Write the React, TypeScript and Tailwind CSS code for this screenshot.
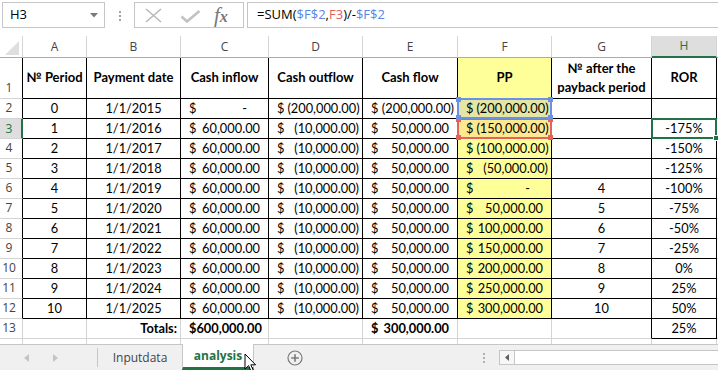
import React from 'react';

type Acc = { k: 'neg' | 'pos' | 'zero'; v?: string; bold?: boolean };

const GRID = 'grid grid-cols-[23px_64px_94px_88px_94px_95px_94px_100px_65px_1fr]';
const UI = "font-['Open_Sans',sans-serif]";

const neg = (v: string): Acc => ({ k: 'neg', v });
const pos = (v: string): Acc => ({ k: 'pos', v });
const zero: Acc = { k: 'zero' };

const pp: Acc[] = [
  neg('200,000.00'),
  neg('150,000.00'),
  neg('100,000.00'),
  neg('50,000.00'),
  zero,
  pos('50,000.00'),
  pos('100,000.00'),
  pos('150,000.00'),
  pos('200,000.00'),
  pos('250,000.00'),
  pos('300,000.00'),
];
const after = ['', '', '', '', '4', '5', '6', '7', '8', '9', '10'];
const ror = ['', '-175%', '-150%', '-125%', '-100%', '-75%', '-50%', '-25%', '0%', '25%', '50%'];

function Money({ a }: { a: Acc }) {
  const pad = a.k === 'neg' ? 'pr-[3px]' : a.k === 'pos' ? 'pr-[8px]' : 'pr-[21px]';
  return (
    <div className={`flex w-full justify-between gap-[3px] whitespace-nowrap pl-[8px] ${pad} ${a.bold ? 'font-bold' : ''}`}>
      <span>$</span>
      <span>{a.k === 'zero' ? '-' : a.k === 'neg' ? `(${a.v})` : a.v}</span>
    </div>
  );
}

function RowHdr({ n, sel, dark }: { n: number; sel?: boolean; dark?: boolean }) {
  if (sel) {
    return (
      <div className={`${UI} flex items-center justify-center border-b border-r-2 border-b-[#d4d4d4] border-r-[#217346] bg-[#dedede] pr-[3px] text-[12px] text-[#217346]`}>
        {n}
      </div>
    );
  }
  return (
    <div className={`${UI} flex items-end justify-center border-b border-r border-b-[#d4d4d4] pb-[1px] pr-[4px] text-[12px] text-[#444] ${dark ? 'border-r-black' : 'border-r-[#d4d4d4]'}`}>
      {n}
    </div>
  );
}

function Corners({ color }: { color: string }) {
  return (
    <>
      <span className={`absolute -left-[3px] -top-[3px] h-[5px] w-[5px] ${color}`} />
      <span className={`absolute -right-[3px] -top-[3px] h-[5px] w-[5px] ${color}`} />
      <span className={`absolute -bottom-[3px] -left-[3px] h-[5px] w-[5px] ${color}`} />
      <span className={`absolute -bottom-[3px] -right-[3px] h-[5px] w-[5px] ${color}`} />
    </>
  );
}

function FormulaBar() {
  return (
    <div className="flex h-[36px] items-start pl-[2px] pt-[2px]">
      <div className={`${UI} flex h-[26px] w-[103px] items-center justify-between border border-[#c6c6c6] pl-[7px] pr-[6px] text-[13px] text-black`}>
        <span>H3</span>
        <svg width="8" height="5" viewBox="0 0 8 5">
          <polygon points="0,0 8,0 4,4.5" fill="#7a7a7a" />
        </svg>
      </div>
      <div className="flex w-[29px] flex-col items-center gap-[2px] pt-[9px]">
        <span className="h-[2px] w-[2px] bg-[#a0a0a0]" />
        <span className="h-[2px] w-[2px] bg-[#a0a0a0]" />
        <span className="h-[2px] w-[2px] bg-[#a0a0a0]" />
      </div>
      <div className="flex h-[26px] w-[110px] items-center border border-[#c6c6c6]">
        <svg className="ml-[10px]" width="17" height="15" viewBox="0 0 17 15">
          <path d="M1 1 L16 14 M16 1 L1 14" stroke="#b5b5b5" strokeWidth="1.4" fill="none" />
        </svg>
        <svg className="ml-[18px] mt-[2px]" width="21" height="13" viewBox="0 0 21 13">
          <path d="M1.5 6.5 L7 11.5 L19.5 1" stroke="#c2c2c2" strokeWidth="2.6" fill="none" />
        </svg>
        <span className="ml-[13px] flex items-baseline font-['Liberation_Serif',serif] italic text-[#777]">
          <span className="text-[21px] leading-none">f</span>
          <span className="text-[16px] font-bold leading-none">x</span>
        </span>
      </div>
      <div className={`${UI} ml-[3px] flex h-[26px] flex-1 items-center border border-r-0 border-[#c6c6c6] pl-[9px] text-[13px] text-black`}>
        =SUM(<span className="text-[#5a84e6]">$F$2</span>,<span className="text-[#e2605c]">F3</span>)/-
        <span className="text-[#5a84e6]">$F$2</span>
      </div>
    </div>
  );
}

function ColHeaders() {
  const letters = ['A', 'B', 'C', 'D', 'E', 'F', 'G'];
  return (
    <div className={`${GRID} ${UI} h-[22px] text-[12px] text-[#444]`}>
      <div className="flex items-end justify-end border-b border-r border-b-[#ababab] border-r-[#d4d4d4] pb-[2px] pr-[3px]">
        <svg width="14" height="14" viewBox="0 0 14 14">
          <polygon points="14,0 14,14 0,14" fill="#dfdfdf" />
        </svg>
      </div>
      {letters.map((l) => (
        <div key={l} className="flex items-center justify-center border-b border-r border-b-[#ababab] border-r-[#d4d4d4]">
          {l}
        </div>
      ))}
      <div className="flex items-center justify-center border-b-2 border-r border-b-[#217346] border-r-[#d4d4d4] bg-[#dedede] text-[#217346]">
        H
      </div>
      <div className="border-b border-b-[#ababab]" />
    </div>
  );
}

function HeaderRow() {
  const cell = 'flex items-center justify-center border-b border-r border-black text-center text-[13px] font-bold';
  return (
    <div className={`${GRID} h-[41px]`}>
      <RowHdr n={1} dark />
      <div className={cell}>№ Period</div>
      <div className={cell}>Payment date</div>
      <div className={cell}>Cash inflow</div>
      <div className={cell}>Cash outflow</div>
      <div className={cell}>Cash flow</div>
      <div className={`${cell} bg-[#ffff99]`}>PP</div>
      <div className={`${cell} leading-[19px]`}>
        № after the
        <br />
        payback period
      </div>
      <div className={cell}>ROR</div>
      <div className="border-b border-b-[#d4d4d4]" />
    </div>
  );
}

function DataRow({ i }: { i: number }) {
  const cell = 'flex items-center border-b border-r border-black';
  const center = `${cell} justify-center`;
  const first = i === 0;
  const fill = i === 0 ? 'bg-[#e4e6a6]' : i === 1 ? 'bg-[#fde98f]' : 'bg-[#ffff99]';
  return (
    <div className={`${GRID} h-[20px]`}>
      <RowHdr n={i + 2} sel={i === 1} dark />
      <div className={center}>{i}</div>
      <div className={center}>1/1/{2015 + i}</div>
      <div className={cell}>
        <Money a={first ? zero : pos('60,000.00')} />
      </div>
      <div className={cell}>
        <Money a={first ? neg('200,000.00') : neg('10,000.00')} />
      </div>
      <div className={cell}>
        <Money a={first ? neg('200,000.00') : pos('50,000.00')} />
      </div>
      <div className={`${cell} relative ${fill}`}>
        <Money a={pp[i]} />
        {i === 0 && (
          <div className="absolute -bottom-[1px] -left-[1px] -right-[1px] -top-[1px] z-20 border-2 border-[#6a90e8]">
            <Corners color="bg-[#6a90e8]" />
          </div>
        )}
        {i === 1 && (
          <div className="absolute -bottom-[1px] -left-[1px] -right-[1px] -top-[1px] z-10 border-2 border-[#e5625b]">
            <Corners color="bg-[#e5625b]" />
          </div>
        )}
      </div>
      <div className={center}>{after[i]}</div>
      <div className={`${center} relative`}>
        {ror[i]}
        {i === 1 && (
          <div className="absolute -bottom-[1px] -left-[1px] -right-[1px] -top-[1px] z-20 border-2 border-[#217346]">
            <span className="absolute -bottom-[4px] -right-[4px] h-[6px] w-[6px] border border-white bg-[#217346]" />
          </div>
        )}
      </div>
      <div className="border-b border-b-[#d4d4d4]" />
    </div>
  );
}

function TotalsRow() {
  const g = 'flex items-center border-b border-r border-[#d4d4d4]';
  return (
    <div className={`${GRID} h-[20px]`}>
      <RowHdr n={13} />
      <div className={g} />
      <div className={`${g} justify-end pr-[3px] font-bold`}>Totals:</div>
      <div className={g}>
        <div className="flex w-full justify-between whitespace-nowrap pl-[8px] pr-[8px] font-bold">
          <span>$</span>
          <span>600,000.00</span>
        </div>
      </div>
      <div className={g} />
      <div className={g}>
        <Money a={{ k: 'pos', v: '300,000.00', bold: true }} />
      </div>
      <div className={g} />
      <div className="flex items-center border-b border-r border-b-[#d4d4d4] border-r-black" />
      <div className="flex items-center justify-center border-b border-r border-black">25%</div>
      <div className="border-b border-b-[#d4d4d4]" />
    </div>
  );
}

function PartialRow() {
  const g = 'border-r border-[#d4d4d4]';
  return (
    <div className={`${GRID} h-[5px]`}>
      <div className={g} />
      <div className={g} />
      <div className={g} />
      <div className={g} />
      <div className={g} />
      <div className={g} />
      <div className={g} />
      <div className={g} />
      <div className={g} />
      <div />
    </div>
  );
}

function TabBar() {
  return (
    <div className={`${UI} relative flex h-[26px] items-stretch border-t border-[#c6c6c6] bg-[#f0f0f0] text-[12px]`}>
      <div className="flex w-[97px] items-center gap-[24px] pl-[24px]">
        <svg width="5" height="8" viewBox="0 0 5 8">
          <polygon points="5,0 5,8 0,4" fill="#c4c4c4" />
        </svg>
        <svg width="5" height="8" viewBox="0 0 5 8">
          <polygon points="0,0 0,8 5,4" fill="#c4c4c4" />
        </svg>
      </div>
      <div className="my-[3px] w-px bg-[#c6c6c6]" />
      <div className="flex w-[84px] items-center justify-center text-[#444]">Inputdata</div>
      <div className="-mt-px flex w-[72px] items-center justify-center border-x border-b-[3px] border-x-[#c6c6c6] border-b-[#217346] bg-white font-bold text-[#217346]">
        analysis
      </div>
      <div className="flex w-[82px] items-center justify-center">
        <svg width="16" height="16" viewBox="0 0 16 16">
          <circle cx="8" cy="8" r="7" stroke="#7a7a7a" strokeWidth="1.2" fill="none" />
          <path d="M8 4.2 V11.8 M4.2 8 H11.8" stroke="#7a7a7a" strokeWidth="1.6" />
        </svg>
      </div>
      <div className="flex flex-1 items-center justify-end pr-[14px]">
        <div className="flex flex-col gap-[2px]">
          <span className="h-[2px] w-[2px] bg-[#b0b0b0]" />
          <span className="h-[2px] w-[2px] bg-[#b0b0b0]" />
          <span className="h-[2px] w-[2px] bg-[#b0b0b0]" />
        </div>
      </div>
      <div className="flex h-[15px] w-[219px] self-center border border-r-0 border-[#c6c6c6] bg-white">
        <div className="flex w-[15px] items-center justify-center border-r border-[#c6c6c6] bg-[#f7f7f7]">
          <svg width="4" height="7" viewBox="0 0 4 7">
            <polygon points="4,0 4,7 0,3.5" fill="#606060" />
          </svg>
        </div>
      </div>
      <svg className="absolute left-[244px] top-[8px]" width="13" height="20" viewBox="0 0 13 20">
        <path d="M1 1 L1 16 L4.6 12.6 L7.2 18.6 L9.4 17.6 L6.8 11.8 L11.6 11.8 Z" fill="white" stroke="black" strokeWidth="1" strokeLinejoin="round" />
      </svg>
    </div>
  );
}

export default function App() {
  return (
    <div className="h-[370px] w-[718px] overflow-hidden bg-white font-['Lato',sans-serif] text-[12.8px] text-black">
      <FormulaBar />
      <ColHeaders />
      <HeaderRow />
      {Array.from({ length: 11 }, (_, i) => (
        <DataRow key={i} i={i} />
      ))}
      <TotalsRow />
      <PartialRow />
      <TabBar />
    </div>
  );
}
